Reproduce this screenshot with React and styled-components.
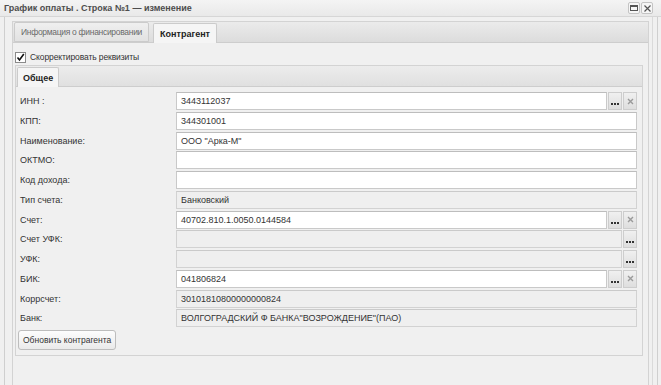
import React from "react";
import styled, { createGlobalStyle } from "styled-components";

const GlobalStyle = createGlobalStyle`
  html, body {
    margin: 0;
    padding: 0;
    background: #f0f0f0;
  }
  body {
    font: 9px "Liberation Sans", Tahoma, sans-serif;
    color: #333;
  }
`;

const Window = styled.div`
  width: 661px;
  height: 385px;
  display: flex;
  flex-direction: column;
  background: #f0f0f0;
  overflow: hidden;
`;

const TitleBar = styled.div`
  height: 16px;
  display: flex;
  align-items: center;
  justify-content: space-between;
  padding: 0 8px 0 4px;
  background: linear-gradient(#f4f4f4, #e9e9e9);
  border-bottom: 1px solid #d6d6d6;
`;

const Title = styled.span`
  font-weight: bold;
  color: #4d4d4d;
  font-size: 9px;
`;

const Tools = styled.div`
  display: flex;
  gap: 1px;
`;

const Tool = styled.span`
  width: 10px;
  height: 10px;
  border: 1px solid #c4c4c4;
  border-radius: 2px;
  background: #f6f6f6;
  display: flex;
  align-items: center;
  justify-content: center;
`;

const Frame = styled.div`
  flex: 1;
  display: flex;
  margin: 0 3px 0 4px;
  padding: 4px 8px 0 7px;
  border-left: 1px solid #cfcfcf;
  border-right: 1px solid #cfcfcf;
  box-shadow: inset -4px 0 0 #f0f0f0, inset -5px 0 0 #dadada;
`;

const TabPanel = styled.div`
  flex: 1;
  display: flex;
  flex-direction: column;
  border: 1px solid #d3d3d3;
  border-bottom: none;
`;

const TabStrip = styled.div`
  height: 20px;
  flex: none;
  display: flex;
  align-items: flex-end;
  gap: ${p => p.gap}px;
  padding-left: ${p => p.pad}px;
  background: ${p => p.bg};
  border-bottom: 1px solid #cdcdcd;
`;

const Tab = styled.div`
  height: ${p => (p.active ? 19 : 18)}px;
  margin-bottom: ${p => (p.active ? -1 : 0)}px;
  display: flex;
  align-items: center;
  padding: 0 ${p => p.pad}px;
  border: 1px solid #cbcbcb;
  border-bottom: ${p => (p.active ? "none" : "1px solid #cbcbcb")};
  border-radius: 2px 2px 0 0;
  background: ${p => (p.active ? "#f5f5f5" : "linear-gradient(#efefef, #e2e2e2)")};
  color: ${p => (p.active ? "#222" : "#6a6a6a")};
  font-weight: ${p => (p.active ? "bold" : "normal")};
  font-size: ${p => (p.active ? 9 : 8.5)}px;
  letter-spacing: ${p => (p.active ? 0 : -0.3)}px;
  white-space: nowrap;
`;

const TabBody = styled.div`
  flex: 1;
  display: flex;
  flex-direction: column;
  padding: 8px 5px 0 2px;
`;

const CheckRow = styled.label`
  display: flex;
  align-items: center;
  gap: 4px;
  height: 12px;
  margin-bottom: 2px;
  color: #333;
  font-size: 8.5px;
  letter-spacing: -0.1px;
`;

const CheckBox = styled.span`
  width: 9px;
  height: 9px;
  border: 1px solid #8a8a8a;
  background: #fff;
  display: flex;
  align-items: center;
  justify-content: center;
`;

const InnerPanel = styled.div`
  height: 289px;
  display: flex;
  flex-direction: column;
  border: 1px solid #d3d3d3;
`;

const Form = styled.div`
  display: grid;
  grid-template-columns: 156px 1fr;
  grid-auto-rows: 18px;
  row-gap: 1.75px;
  padding: 5px 5px 0 4px;
`;

const Label = styled.div`
  display: flex;
  align-items: center;
  color: #333;
`;

const Field = styled.div`
  display: flex;
  gap: 1px;
`;

const Input = styled.div`
  flex: 1;
  display: flex;
  align-items: center;
  padding: 0 4px;
  background: ${p => (p.readOnly ? "#efefef" : "#fff")};
  border: 1px solid ${p => (p.readOnly ? "#d2d2d2" : "#c9c9c9")};
  border-top-color: ${p => (p.readOnly ? "#cacaca" : "#bdbdbd")};
  color: #333;
  white-space: nowrap;
  overflow: hidden;
`;

const Trigger = styled.div`
  width: 12px;
  display: flex;
  align-items: ${p => (p.dots ? "flex-end" : "center")};
  justify-content: center;
  padding-bottom: ${p => (p.dots ? 4 : 0)}px;
  border: 1px solid #cdcdcd;
  background: linear-gradient(#f0f0f0, #dedede);
  box-sizing: content-box;
`;

const Dots = styled.span`
  display: flex;
  gap: 1px;
  & > i {
    width: 2px;
    height: 2px;
    background: #333;
  }
`;

const Button = styled.button`
  align-self: flex-start;
  margin: 3px 0 0 2px;
  height: 20px;
  padding: 0 4px;
  border: 1px solid #bdbdbd;
  border-radius: 3px;
  background: linear-gradient(#fdfdfd, #eaeaea);
  font: 8.5px "Liberation Sans", Tahoma, sans-serif;
  color: #333;
`;

const rows = [
  { label: "ИНН :", value: "3443112037", dots: true, clear: true },
  { label: "КПП:", value: "344301001" },
  { label: "Наименование:", value: "ООО \"Арка-М\"" },
  { label: "ОКТМО:", value: "" },
  { label: "Код дохода:", value: "" },
  { label: "Тип счета:", value: "Банковский", readOnly: true },
  { label: "Счет:", value: "40702.810.1.0050.0144584", dots: true, clear: true },
  { label: "Счет УФК:", value: "", readOnly: true, dots: true },
  { label: "УФК:", value: "", readOnly: true, dots: true },
  { label: "БИК:", value: "041806824", dots: true, clear: true },
  { label: "Коррсчет:", value: "30101810800000000824", readOnly: true },
  { label: "Банк:", value: "ВОЛГОГРАДСКИЙ Ф БАНКА\"ВОЗРОЖДЕНИЕ\"(ПАО)", readOnly: true },
];

const ClearIcon = () => (
  <svg width="7" height="7" viewBox="0 0 7 7">
    <path d="M1 1L6 6M6 1L1 6" stroke="#9a9a9a" strokeWidth="1.4" />
  </svg>
);

export default function App() {
  return (
    <Window>
      <GlobalStyle />
      <TitleBar>
        <Title>График оплаты . Строка №1 — изменение</Title>
        <Tools>
          <Tool>
            <svg width="8" height="6" viewBox="0 0 8 6">
              <rect x="0.5" y="0.5" width="7" height="5" fill="none" stroke="#555" />
              <rect x="0.5" y="0.5" width="7" height="1.5" fill="#555" />
            </svg>
          </Tool>
          <Tool>
            <svg width="7" height="7" viewBox="0 0 7 7">
              <path d="M0.5 0.5L6.5 6.5M6.5 0.5L0.5 6.5" stroke="#555" strokeWidth="1.2" />
            </svg>
          </Tool>
        </Tools>
      </TitleBar>
      <Frame>
        <TabPanel>
          <TabStrip gap={4} pad={1} bg="linear-gradient(#ebebeb, #dcdcdc)">
            <Tab pad={6}>Информация о финансировании</Tab>
            <Tab active pad={6}>Контрагент</Tab>
          </TabStrip>
          <TabBody>
            <CheckRow>
              <CheckBox>
                <svg width="9" height="9" viewBox="0 0 9 9">
                  <path d="M1.5 4.5L3.5 7L7.8 1" fill="none" stroke="#111" strokeWidth="1.6" />
                </svg>
              </CheckBox>
              Скорректировать реквизиты
            </CheckRow>
            <InnerPanel>
              <TabStrip gap={0} pad={1} bg="linear-gradient(#ececec, #e0e0e0)">
                <Tab active pad={5}>Общее</Tab>
              </TabStrip>
              <Form>
                {rows.map(r => (
                  <React.Fragment key={r.label}>
                    <Label>{r.label}</Label>
                    <Field>
                      <Input readOnly={r.readOnly}>{r.value}</Input>
                      {r.dots && (
                        <Trigger dots>
                          <Dots><i /><i /><i /></Dots>
                        </Trigger>
                      )}
                      {r.clear && (
                        <Trigger>
                          <ClearIcon />
                        </Trigger>
                      )}
                    </Field>
                  </React.Fragment>
                ))}
              </Form>
              <Button>Обновить контрагента</Button>
            </InnerPanel>
          </TabBody>
        </TabPanel>
      </Frame>
    </Window>
  );
}
